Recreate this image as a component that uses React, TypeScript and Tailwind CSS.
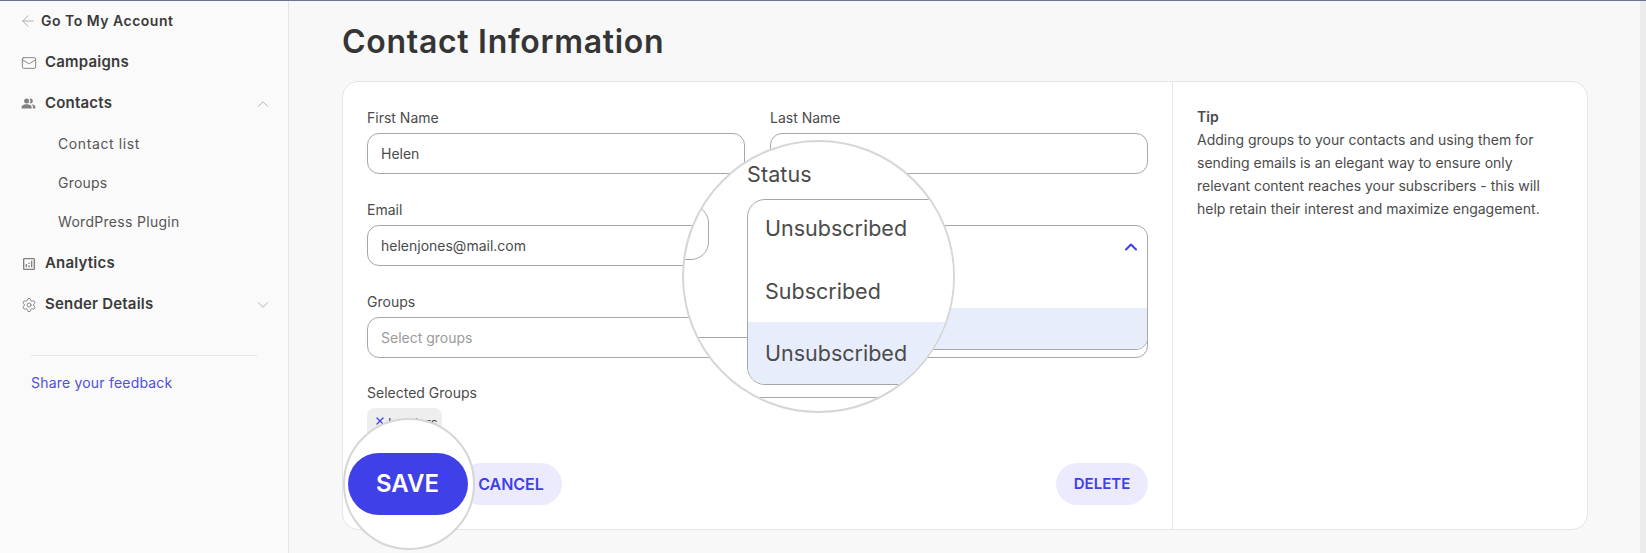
import { ArrowLeft, ChevronDown, ChevronUp, Mail, Settings, X } from "lucide-react";
import { MdOutlineAnalytics, MdPeopleAlt } from "react-icons/md";

const body = "font-['Inter',sans-serif]";

function NavItem({ icon, label, chevron, className = "" }: { icon: React.ReactNode; label: string; chevron?: "up" | "down"; className?: string }) {
  return (
    <div className={`flex h-[41px] items-center pl-[21px] pr-[16px] ${className}`}>
      <span className="flex w-6 shrink-0 items-center text-[#808080]">{icon}</span>
      <span className="text-[15px] font-semibold tracking-[0.2px] text-[#3a3a3a]">{label}</span>
      {chevron === "up" && <ChevronUp className="ml-auto h-[18px] w-[18px] text-[#aaa]" strokeWidth={1.2} />}
      {chevron === "down" && <ChevronDown className="ml-auto h-[18px] w-[18px] text-[#aaa]" strokeWidth={1.2} />}
    </div>
  );
}

function Field({ label, value, placeholder }: { label: string; value?: string; placeholder?: string }) {
  return (
    <div>
      <div className="mb-[5px] h-5 text-sm leading-5 text-[#4b4b4b]">{label}</div>
      <div className="flex h-[41px] items-center rounded-xl border border-[#a6a6a6] bg-white px-[13px] text-sm text-[#4b4b4b]">
        {value}
        {placeholder && <span className="text-[#9a9a9a]">{placeholder}</span>}
      </div>
    </div>
  );
}

export default function App() {
  return (
    <div className={`flex h-[553px] overflow-hidden border-t border-[#6b7390] bg-[#f8f8f8] ${body}`}>
      <aside className="w-[289px] shrink-0 border-r border-[#e4e4e4] bg-[#fafafa]">
        <div className="flex h-[40px] items-center pl-[19px]">
          <ArrowLeft className="mr-[4px] h-[18px] w-[18px] text-[#999]" strokeWidth={1} />
          <span className="text-sm font-semibold tracking-[0.5px] text-[#3a3a3a]">Go To My Account</span>
        </div>
        <NavItem className="mt-px" icon={<Mail className="h-[16px] w-[16px]" strokeWidth={1.4} />} label="Campaigns" />
        <NavItem icon={<MdPeopleAlt className="h-[15px] w-[15px]" />} label="Contacts" chevron="up" />
        <div className="flex h-10 items-center pl-[58px] text-sm tracking-[0.6px] text-[#555]">Contact list</div>
        <div className="flex h-[38px] items-center pl-[58px] text-sm tracking-[0.2px] text-[#555]">Groups</div>
        <div className="flex h-[39px] items-center pl-[58px] text-sm tracking-[0.3px] text-[#555]">WordPress Plugin</div>
        <NavItem className="mt-[2px]" icon={<MdOutlineAnalytics className="h-[16px] w-[16px]" />} label="Analytics" />
        <NavItem icon={<Settings className="h-[16px] w-[16px]" strokeWidth={1.4} />} label="Sender Details" chevron="down" />
        <div className="mx-[31px] mt-[30px] border-t border-[#e6e6e6]" />
        <div className="ml-[31px] mt-[17px] text-sm tracking-[0.2px] text-[#4f4fd8]">Share your feedback</div>
      </aside>

      <main className="flex-1 pl-[53px]">
        <h1 className="flex h-[80px] items-center pt-[2px] text-[32px] font-semibold tracking-[0.7px] text-[#353535]">Contact Information</h1>

        <div className="flex h-[449px] w-[1246px] rounded-[16px] border border-[#e6e6e6] bg-white">
          <div className="relative w-[830px] shrink-0 border-r border-[#e6e6e6] px-[24px] pt-[26px]">
            <div className="grid grid-cols-2 gap-x-[25px] gap-y-[26px]">
              <Field label="First Name" value="Helen" />
              <Field label="Last Name" />
              <Field label="Email" value="helenjones@mail.com" />
              <div className="relative">
                <div className="mb-[5px] h-5" />
                <div className="absolute left-0 right-0 top-[25px] z-10 overflow-hidden rounded-xl border border-[#a6a6a6] bg-white">
                  <div className="flex h-[41px] items-center justify-end pr-[6px]">
                    <ChevronUp className="h-5 w-5 text-[#4040e8]" strokeWidth={2.5} />
                  </div>
                  <div className="h-[41px]" />
                  <div className="h-[41px] bg-[#e7edfb]" />
                </div>
              </div>
              <div className="col-span-2">
                <Field label="Groups" placeholder="Select groups" />
              </div>
            </div>

            <div className="mb-[5px] mt-[25px] h-5 text-sm leading-5 text-[#4b4b4b]">Selected Groups</div>
            <div className="flex h-8 w-[75px] items-center gap-[2px] rounded-lg bg-[#eeeeee] pl-[7px] text-[13px] text-[#4b4b4b]">
              <X className="h-[12px] w-[12px] shrink-0 -translate-y-[3px] text-[#4040e8]" strokeWidth={2.5} />
              Leaders
            </div>

            <div className="mt-[23px] flex items-center gap-2">
              <div className="h-[42px] w-[85px] rounded-full bg-[#4040e8]" />
              <button className="h-[42px] w-[102px] rounded-full bg-[#ecebfd] text-[16px] font-semibold text-[#4040e8]">CANCEL</button>
              <button className="ml-auto h-[42px] w-[92px] rounded-full bg-[#ecebfd] text-[15px] font-semibold text-[#4040e8]">DELETE</button>
            </div>

            {/* status magnifier */}
            <div className="absolute left-[339px] top-[58px] z-20 h-[273px] w-[273px] overflow-hidden rounded-full border-2 border-[#d6d6d6] bg-white pl-[63px] pt-[19px]">
              <div className="absolute left-[-100px] top-[63px] h-[55px] w-[125px] rounded-[18px] border border-[#a6a6a6]" />
              <div className="absolute left-[-100px] top-[195px] h-[61px] w-[600px] rounded-[18px] border border-[#a6a6a6]" />
              <div className="text-[21.5px] leading-[26px] tracking-[0.1px] text-[#4b4b4b]">Status</div>
              <div className="relative mt-[12px] h-[186px] w-[500px] overflow-hidden rounded-[18px] border border-[#a6a6a6] bg-white text-[21.5px] text-[#4b4b4b]">
                <div className="flex h-[60px] items-center pl-[17px] pb-[3px]">Unsubscribed</div>
                <div className="flex h-[62px] items-center pl-[17px]">Subscribed</div>
                <div className="flex h-[62px] items-center bg-[#e7edfb] pl-[17px]">Unsubscribed</div>
              </div>
            </div>

            {/* save magnifier */}
            <div className="absolute left-0 top-[336px] z-20 flex h-[132px] w-[132px] items-center justify-center rounded-full border-2 border-[#d6d6d6] bg-white pr-[3px]">
              <div className="flex h-[62px] w-[120px] shrink-0 items-center justify-center rounded-full bg-[#4040e8] text-[24px] font-semibold text-white">SAVE</div>
            </div>
          </div>

          <div className="flex-1 px-[24px] pt-[23px] text-sm leading-[23px] text-[#4b4b4b]">
            <div className="font-semibold">Tip</div>
            <p>
              Adding groups to your contacts and using them for sending emails is an elegant way to ensure only relevant content reaches your subscribers - this will help retain their interest and maximize engagement.
            </p>
          </div>
        </div>
      </main>

      <div className="w-[6px] shrink-0 bg-[#ececec]" />
    </div>
  );
}
